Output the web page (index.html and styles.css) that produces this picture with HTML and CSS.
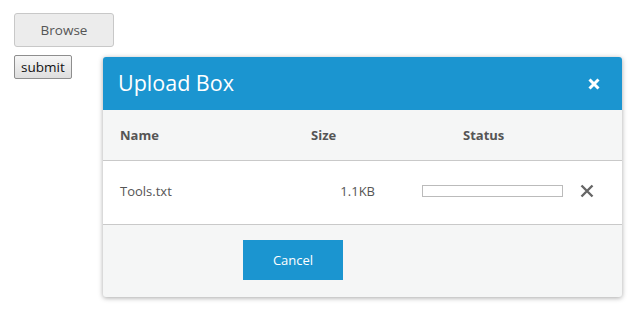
FILE: index.html
```html
<!DOCTYPE html>
<html>
<head>
<meta charset="utf-8">
<title>Upload Box</title>
<link rel="stylesheet" href="styles.css">
</head>
<body>

<div class="uploader">
  <button class="browse">Browse</button>
  <button class="submit">submit</button>
</div>

<div class="dialog">
  <div class="dialogHead">
    <span class="dialogTitle">Upload Box</span>
    <svg class="close" width="12" height="12" viewBox="0 0 12 12">
      <path d="M1.5 1.5 L10.5 10.5 M10.5 1.5 L1.5 10.5" stroke="#fff" stroke-width="3"/>
    </svg>
  </div>
  <div class="colHead">
    <span>Name</span>
    <span>Size</span>
    <span>Status</span>
  </div>
  <div class="fileRow">
    <span class="fileName">Tools.txt</span>
    <span class="fileSize">1.1KB</span>
    <span class="progress"></span>
    <svg class="remove" width="14" height="14" viewBox="0 0 14 14">
      <path d="M1.5 1.5 L12.5 12.5 M12.5 1.5 L1.5 12.5" stroke="#666" stroke-width="2.4"/>
    </svg>
  </div>
  <div class="dialogFoot">
    <button class="cancel">Cancel</button>
  </div>
</div>

</body>
</html>
```

FILE: styles.css
```css
body {
  margin: 0;
  font-family: "Open Sans", "Noto Sans", sans-serif;
  background: #fff;
}
.uploader {
  display: flex;
  flex-direction: column;
  align-items: flex-start;
  gap: 8px;
  padding: 13px 0 0 14px;
}
.browse {
  width: 100px;
  height: 34px;
  background-color: #ececec;
  border: 1px solid #c8c8c8;
  border-radius: 3px;
  color: #555;
  font-family: "Open Sans", sans-serif;
  font-size: 13.5px;
}
.submit {
  height: 24px;
  padding: 0 6px;
  background: linear-gradient(#f6f6f6, #dedede);
  border: 1px solid #8e8e8e;
  border-radius: 2px;
  color: #111;
  font-family: "Open Sans", sans-serif;
  font-size: 13.5px;
}
.dialog {
  position: absolute;
  left: 103px;
  top: 57px;
  width: 519px;
  background-color: #f5f6f6;
  border-radius: 3px;
  box-shadow: 0 1px 5px rgba(0, 0, 0, 0.35);
  overflow: hidden;
}
.dialogHead {
  display: flex;
  align-items: center;
  justify-content: space-between;
  height: 53px;
  padding: 0 22px 0 15px;
  background-color: #1b95d0;
  color: #fff;
}
.dialogTitle {
  font-size: 21.5px;
  padding-bottom: 2px;
}
.close {
  display: block;
}
.colHead {
  display: grid;
  grid-template-columns: 191px 152px auto;
  align-items: center;
  height: 50px;
  padding-left: 17px;
  border-bottom: 1px solid #c9c9c9;
  color: #555;
  font-size: 13px;
  font-weight: bold;
}
.fileRow {
  display: flex;
  align-items: center;
  height: 64px;
  padding: 0 0 4px 17px;
  box-sizing: border-box;
  background-color: #fff;
  border-bottom: 1px solid #c9c9c9;
  color: #555;
  font-size: 13px;
}
.fileName {
  width: 191px;
}
.fileSize {
  width: 64px;
  text-align: right;
}
.progress {
  width: 139px;
  height: 10px;
  margin-left: 47px;
  border: 1px solid #bbb;
}
.remove {
  margin-left: 17px;
}
.dialogFoot {
  height: 72px;
  padding: 15px 0 0 140px;
  box-sizing: border-box;
}
.cancel {
  width: 100px;
  height: 40px;
  background-color: #1b95d0;
  border: none;
  color: #fff;
  font-family: "Open Sans", sans-serif;
  font-size: 13px;
}
```
